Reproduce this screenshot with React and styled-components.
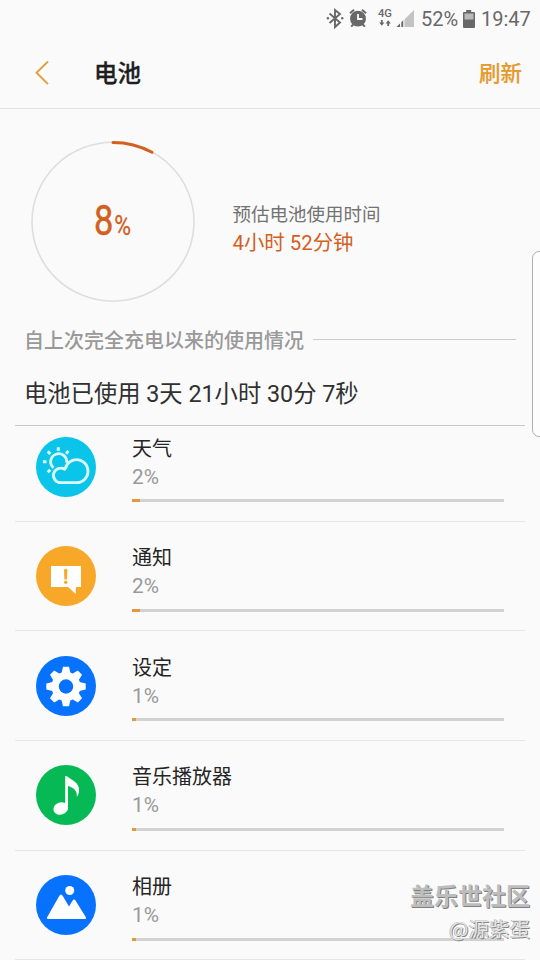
import styled, { createGlobalStyle } from "styled-components";

const apps = [
    { name: "天气", percent: 2, used: 8, color: "#0AC4EA", icon: WeatherIcon },
    { name: "通知", percent: 2, used: 8, color: "#F8A828", icon: NoticeIcon },
    { name: "设定", percent: 1, used: 4, color: "#0772FD", icon: GearIcon },
    { name: "音乐播放器", percent: 1, used: 4, color: "#07B954", icon: MusicIcon },
    { name: "相册", percent: 1, used: 4, color: "#0772FD", icon: GalleryIcon },
];

export default function App() {
    return (
        <Screen>
            <GlobalStyle />
            <StatusBar>
                <StatusIcons />
                <StatusText $width={36}>52%</StatusText>
                <BatteryIcon />
                <StatusText $width={49}>19:47</StatusText>
            </StatusBar>
            <Header>
                <BackIcon />
                <Title>电池</Title>
                <Refresh>刷新</Refresh>
            </Header>
            <Summary>
                <Gauge>
                    <Ring />
                    <Level>
                        8<small>%</small>
                    </Level>
                </Gauge>
                <Estimate>
                    <EstimateLabel>预估电池使用时间</EstimateLabel>
                    <EstimateTime>4小时 52分钟</EstimateTime>
                </Estimate>
            </Summary>
            <SectionTitle>
                <span>自上次完全充电以来的使用情况</span>
            </SectionTitle>
            <UsedTime>电池已使用 3天 21小时 30分 7秒</UsedTime>
            <List>
                {apps.map(({ name, percent, used, color, icon: Icon }) => (
                    <Row key={name}>
                        <AppIcon $color={color}>
                            <Icon />
                        </AppIcon>
                        <Info>
                            <Name>{name}</Name>
                            <Percent>{percent}%</Percent>
                            <Bar>
                                <Used style={{ width: used }} />
                            </Bar>
                        </Info>
                    </Row>
                ))}
            </List>
            <EdgeHandle />
            <Watermark>
                <Community>盖乐世社区</Community>
                <Author>@源紫蛋</Author>
            </Watermark>
        </Screen>
    );
}

function StatusIcons() {
    return (
        <svg width="90" height="24" viewBox="326 7 90 24" fill="none">
            <path d="M329.5 13.5l10.5 9-5 4.5V10l5 4-10.5 9" stroke="#686868" strokeWidth="1.9" />
            <circle cx="327.9" cy="18.3" r="1.2" fill="#686868" />
            <circle cx="342.2" cy="18.3" r="1.2" fill="#686868" />
            <circle cx="358" cy="18.7" r="7.9" fill="#686868" />
            <path d="M350 13.2l4-3.4M366 13.2l-4-3.4M353.2 24.5l-2 2.2M362.8 24.5l2 2.2" stroke="#686868" strokeWidth="2" />
            <path d="M358 14v5h4.5" stroke="#FAFAFA" strokeWidth="1.8" />
            <text x="378" y="17" fontFamily="Roboto" fontWeight="500" fontSize="10.5" textLength="14" lengthAdjust="spacingAndGlyphs" fill="#686868">4G</text>
            <path d="M381.8 20v3M388.2 23v3" stroke="#686868" strokeWidth="1.8" />
            <path d="M379.2 22.5h5.2l-2.6 3.3zM385.6 23.5h5.2l-2.6-3.3z" fill="#686868" />
            <path d="M414 10v17h-17.5z" fill="#C3C3C3" />
            <path d="M396.5 27l3.6-3.5V27zM401.4 27v-4.7l1.7-1.7V27z" fill="#686868" />
            <path d="M400.6 22v5M404 19v8" stroke="#FAFAFA" />
        </svg>
    );
}

function BatteryIcon() {
    return (
        <svg width="14" height="20" viewBox="0 0 14 20">
            <path d="M4.2 1h5v2H12a1 1 0 0 1 1 1v14a1 1 0 0 1-1 1H2a1 1 0 0 1-1-1V4a1 1 0 0 1 1-1h2.2z" fill="#686868" />
            <path d="M2.5 4.5h9v6h-9z" fill="#B9B9B9" />
        </svg>
    );
}

function BackIcon() {
    return (
        <svg width="16" height="26" viewBox="0 0 16 26" fill="none">
            <path d="M14 1.5L2.5 12.8 14 24.1" stroke="#E2A03C" strokeWidth="1.9" />
        </svg>
    );
}

function Ring() {
    return (
        <svg width="166" height="166" viewBox="0 0 166 166" fill="none">
            <ellipse cx="83" cy="82.7" rx="81" ry="79.5" stroke="#DEDEDE" strokeWidth="1.6" />
            <path d="M83 3.4A81 79.5 0 0 1 122 13.2" stroke="#D2601E" strokeWidth="3" strokeLinecap="round" />
        </svg>
    );
}

function WeatherIcon() {
    return (
        <svg width="60" height="60" viewBox="0 0 60 60" fill="none" stroke="#D9FAFF" strokeWidth="2.8">
            <path d="M17.5 30.8A8 8 0 1 1 30.6 25.8" />
            <path d="M24.800 45.700H40.500A11.500 11.500 0 1 0 29.400 31.300L28.600 32.200A7.300 7.300 0 1 0 24.800 45.700Z" />
            <path d="M22.300 10.200v3.600M11.700 14.400l2.600 2.600M32.600 14l-2.600 2.600M6.900 24.700h3.600M11.700 35.300l2.600-2.600" strokeWidth="3" />
        </svg>
    );
}

function NoticeIcon() {
    return (
        <svg width="60" height="60" viewBox="0 0 60 60">
            <path d="M15 20h30v21h-5.200v7L32 41H15z" fill="#FFF" />
            <path d="M28 24.500a1.700 1.700 0 0 1 3.400 0L31 33.500h-2.600z" fill="#F8A828" />
            <circle cx="29.700" cy="36.300" r="1.700" fill="#F8A828" />
        </svg>
    );
}

function GearIcon() {
    return (
        <svg width="60" height="60" viewBox="0 0 60 60">
            <g fill="#FFF">
                <circle cx="30" cy="30.500" r="14.500" />
                {[0, 45, 90, 135, 180, 225, 270, 315].map((angle) => (
                    <path key={angle} d="M25.300 18l1.700-7.200h6l1.700 7.200z" transform={`rotate(${angle} 30 30.500)`} />
                ))}
            </g>
            <circle cx="30" cy="30.500" r="7.200" fill="#0772FD" />
        </svg>
    );
}

function MusicIcon() {
    return (
        <svg width="60" height="60" viewBox="0 0 60 60" fill="#FFF">
            <path d="M29.200 41V12c0-1.500 1.300-1.200 2.200-.5C35 15 43.500 17 43 25.500c0 2.500-.8 4.600-2.200 6.500.5-6-2.300-9-8.800-11V41z" />
            <ellipse cx="24.700" cy="43.500" rx="7.500" ry="6" transform="rotate(-18 24.700 43.500)" />
        </svg>
    );
}

function GalleryIcon() {
    return (
        <svg width="60" height="60" viewBox="0 0 60 60" fill="#FFF">
            <circle cx="33.700" cy="15.500" r="4.500" />
            <path d="M11 42.500L23.200 21q1.800-3 3.600 0l6.200 10.500 3.300-5.500q1.800-2.800 3.500 0L50 42.500q.5 1.500-1.200 1.500H12.200Q10.500 44 11 42.500z" />
        </svg>
    );
}

const GlobalStyle = createGlobalStyle`
    * {
        box-sizing: border-box;
    }

    body {
        margin: 0;
        background: #FAFAFA;
        font-family: Roboto, "Noto Sans CJK SC", sans-serif;
    }

    svg {
        display: block;
        flex-shrink: 0;
    }
`;

const Screen = styled.div`
    position: relative;
    width: 540px;
    height: 960px;
    overflow: hidden;
    display: flex;
    flex-direction: column;
    background: #FAFAFA;
`;

const StatusBar = styled.div`
    height: 37px;
    flex-shrink: 0;
    display: flex;
    align-items: center;
    justify-content: flex-end;
    padding-right: 10px;

    svg + span {
        margin-left: 5px;
    }

    span + svg {
        margin-left: 5px;
    }
`;

const StatusText = styled.span`
    width: ${(props) => props.$width}px;
    font-size: 20px;
    line-height: 38px;
    color: #686868;
    white-space: nowrap;
`;

const Header = styled.div`
    height: 72px;
    flex-shrink: 0;
    display: flex;
    align-items: center;
    padding: 0 18px 0 34px;
    border-bottom: 1px solid #E2E2E2;
`;

const Title = styled.h1`
    margin: 3px auto 0 44px;
    font-size: 23.5px;
    font-weight: 500;
    line-height: 34px;
    color: #1E1E1E;
    -webkit-text-stroke: 0.3px #1E1E1E;
`;

const Refresh = styled.span`
    margin-top: 2px;
    font-size: 21.5px;
    font-weight: 500;
    line-height: 34px;
    color: #E59A2D;
    -webkit-text-stroke: 0.2px #E59A2D;
`;

const Summary = styled.div`
    height: 212px;
    flex-shrink: 0;
    display: flex;
    padding: 30px 0 0 29.5px;
`;

const Gauge = styled.div`
    display: grid;
    width: 166px;
    height: 166px;

    > * {
        grid-area: 1 / 1;
    }
`;

const Level = styled.div`
    place-self: center;
    margin: 3px 0 0 1px;
    font-size: 42px;
    line-height: 48px;
    color: #D2601E;
    transform: scaleX(0.82);
    -webkit-text-stroke: 0.5px #D2601E;

    small {
        font-size: 28px;
        margin-left: 1px;
        -webkit-text-stroke: 0.3px #D2601E;
    }
`;

const Estimate = styled.div`
    margin: 62px 0 0 37px;
    display: flex;
    flex-direction: column;
`;

const EstimateLabel = styled.span`
    font-size: 18.5px;
    line-height: 28px;
    color: #737373;
`;

const EstimateTime = styled.span`
    font-size: 20.4px;
    line-height: 28px;
    color: #D2601E;
`;

const SectionTitle = styled.div`
    height: 38px;
    flex-shrink: 0;
    display: flex;
    align-items: center;
    padding: 0 24px;
    font-size: 20px;
    font-weight: 500;
    color: #999;

    span {
        line-height: 30px;
        padding-top: 2px;
    }

    &::after {
        content: "";
        flex: 1;
        height: 1px;
        margin: -2px 0 0 9px;
        background: #CBCBCB;
    }
`;

const UsedTime = styled.div`
    height: 66px;
    flex-shrink: 0;
    padding-left: 24px;
    font-size: 23.3px;
    line-height: 70px;
    color: #303030;
`;

const List = styled.div`
    flex: 1;
    min-height: 0;
    margin: 0 15px;
    overflow: hidden;
    border-top: 1px solid #C8C8C8;

    > :first-child {
        margin-top: -13.8px;
    }
`;

const Row = styled.div`
    height: 109.6px;
    display: flex;
    padding: 24.5px 21px 0 21px;
    border-bottom: 1px solid #E6E6E6;
`;

const AppIcon = styled.div`
    width: 60px;
    height: 60px;
    border-radius: 50%;
    flex-shrink: 0;
    background: ${(props) => props.$color};
`;

const Info = styled.div`
    flex: 1;
    display: flex;
    flex-direction: column;
    margin: -4px 0 0 36px;
`;

const Name = styled.span`
    font-size: 20px;
    line-height: 32px;
    color: #252525;
`;

const Percent = styled.span`
    font-size: 20.8px;
    line-height: 24px;
    color: #999;
`;

const Bar = styled.div`
    height: 3px;
    margin-top: 10.5px;
    background: #D2D2D2;
`;

const Used = styled.div`
    height: 100%;
    background: #E29B3B;
`;

const EdgeHandle = styled.div`
    position: absolute;
    top: 251px;
    right: -10px;
    width: 18px;
    height: 186px;
    background: #FDFDFD;
    border: 1px solid #AFAFAF;
    border-radius: 7px;
`;

const Watermark = styled.div`
    position: absolute;
    right: 10px;
    bottom: 17px;
    display: flex;
    flex-direction: column;
    align-items: flex-end;
`;

const Community = styled.span`
    font-size: 24px;
    font-weight: 700;
    line-height: 32px;
    color: #BDBDBD;
    text-shadow: 1px 1px 0 #808080;
`;

const Author = styled.span`
    font-family: "Noto Sans CJK SC", sans-serif;
    font-size: 20.5px;
    line-height: 30px;
    color: #E6E6E6;
    text-shadow: 1px 1px 0 #858585, -0.5px -0.5px 0 #999;
`;
